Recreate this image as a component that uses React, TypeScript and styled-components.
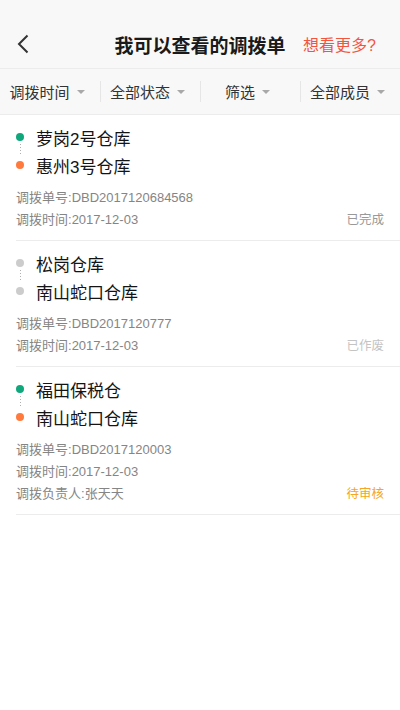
import React from 'react';
import styled, { createGlobalStyle } from 'styled-components';

type Status = 'done' | 'void' | 'pending';

interface Transfer {
    from: string;
    to: string;
    no: string;
    date: string;
    owner?: string;
    status: Status;
}

const transfers: Transfer[] = [
    { from: '萝岗2号仓库', to: '惠州3号仓库', no: 'DBD2017120684568', date: '2017-12-03', status: 'done' },
    { from: '松岗仓库', to: '南山蛇口仓库', no: 'DBD2017120777', date: '2017-12-03', status: 'void' },
    { from: '福田保税仓', to: '南山蛇口仓库', no: 'DBD2017120003', date: '2017-12-03', owner: '张天天', status: 'pending' },
];

const statusText: Record<Status, string> = {
    done: '已完成',
    void: '已作废',
    pending: '待审核',
};

const filters = ['调拨时间', '全部状态', '筛选', '全部成员'];

export default function App() {
    return (
        <Page>
            <GlobalStyle />
            <NavBar>
                <BackButton aria-label="返回">
                    <svg width="12" height="20" viewBox="0 0 12 20">
                        <path d="M10.5 1.5 L2 10 L10.5 18.5" fill="none" stroke="#333" strokeWidth="2" />
                    </svg>
                </BackButton>
                <Title>我可以查看的调拨单</Title>
                <MoreLink>想看更多?</MoreLink>
            </NavBar>

            <FilterBar>
                {filters.map((f) => (
                    <FilterItem key={f}>
                        {f}
                        <Caret />
                    </FilterItem>
                ))}
            </FilterBar>

            <List>
                {transfers.map((t) => (
                    <Card key={t.no}>
                        <Route>
                            <Stop>
                                <Dot color={t.status === 'void' ? '#cccccc' : '#0fa77b'} />
                                {t.from}
                            </Stop>
                            <Stop>
                                <Dot color={t.status === 'void' ? '#cccccc' : '#ff7a3c'} />
                                {t.to}
                            </Stop>
                            <Connector />
                        </Route>
                        <Info>
                            <InfoLine>调拨单号:{t.no}</InfoLine>
                            <InfoLine>调拨时间:{t.date}</InfoLine>
                            {t.owner && <InfoLine>调拨负责人:{t.owner}</InfoLine>}
                            <StatusTag status={t.status}>{statusText[t.status]}</StatusTag>
                        </Info>
                    </Card>
                ))}
            </List>
        </Page>
    );
}

const GlobalStyle = createGlobalStyle`
    html, body {
        margin: 0;
        padding: 0;
        background: #ffffff;
    }

    body {
        font-family: "Liberation Sans", "Noto Sans CJK SC", sans-serif;
    }
`;

const Page = styled.div`
    width: 400px;
    min-height: 710px;
    background: #ffffff;
`;

const NavBar = styled.header`
    display: grid;
    grid-template-columns: 1fr auto 1fr;
    align-items: center;
    height: 48px;
    padding: 20px 16px 0;
    background: #f8f8f8;
`;

const BackButton = styled.button`
    justify-self: start;
    display: flex;
    align-items: center;
    padding: 0;
    margin-left: 1px;
    border: none;
    background: none;
`;

const Title = styled.h1`
    margin: 0;
    font-size: 19px;
    font-weight: 600;
    color: #1a1a1a;
`;

const MoreLink = styled.a`
    justify-self: end;
    margin-right: 8px;
    font-size: 16px;
    color: #f2553d;
`;

const FilterBar = styled.nav`
    display: grid;
    grid-template-columns: repeat(4, 1fr);
    align-items: center;
    height: 45px;
    background: #f8f8f8;
    border-top: 1px solid #ececec;
    border-bottom: 1px solid #ececec;
`;

const FilterItem = styled.div`
    display: flex;
    align-items: center;
    justify-content: center;
    gap: 7px;
    height: 21px;
    padding-right: 6px;
    font-size: 15px;
    color: #333333;

    & + & {
        border-left: 1px solid #e6e6e6;
    }
`;

const Caret = styled.span`
    width: 0;
    height: 0;
    border-left: 4px solid transparent;
    border-right: 4px solid transparent;
    border-top: 4px solid #a8a8a8;
`;

const List = styled.main`
    padding-left: 16px;
`;

const Card = styled.section`
    padding: 8px 16px 9px 0;
    border-bottom: 1px solid #ececec;
`;

const Route = styled.div`
    position: relative;
    display: flex;
    flex-direction: column;
`;

const Stop = styled.div`
    display: flex;
    align-items: center;
    gap: 12px;
    height: 28px;
    font-size: 17px;
    font-weight: 400;
    color: #141414;
`;

const Dot = styled.span<{ color: string }>`
    width: 8px;
    height: 8px;
    border-radius: 50%;
    background: ${(p) => p.color};
`;

const Connector = styled.span`
    position: absolute;
    left: 3.5px;
    top: 21px;
    width: 1px;
    height: 11px;
    background: repeating-linear-gradient(#b0b0b0 0 1px, transparent 1px 3px);
`;

const Info = styled.div`
    position: relative;
    margin-top: 8px;
`;

const InfoLine = styled.div`
    height: 22px;
    line-height: 22px;
    font-size: 13px;
    color: #858585;
`;

const statusColors: Record<Status, string> = {
    done: '#999999',
    void: '#c4c4c4',
    pending: '#f5a623',
};

const StatusTag = styled.span<{ status: Status }>`
    position: absolute;
    right: 0;
    bottom: 0;
    line-height: 22px;
    font-size: 12.5px;
    color: ${(p) => statusColors[p.status]};
`;
